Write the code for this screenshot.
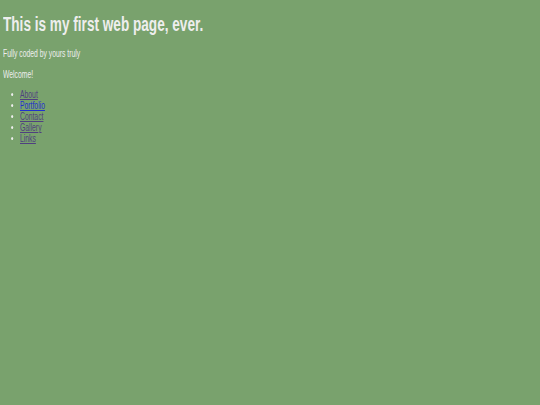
export default function App() {
  return (
    <div className="min-h-[405px] w-full overflow-hidden bg-[#79a26d] px-[3px] pt-[12px] text-[#eeeeee]">
      <div className="origin-top-left scale-x-[0.68] font-['Liberation_Sans',Arial,sans-serif]">
        <h1 className="text-[20px] font-bold leading-[24px]">This is my first web page, ever.</h1>
        <p className="mt-[12px] text-[10px] leading-[12px]">Fully coded by yours truly</p>
        <p className="mt-[9px] text-[10px] leading-[12px]">Welcome!</p>
        <ul className="mt-[8px] list-disc pl-[25px] text-[10px] leading-[11px]">
          <li><a href="#" className="text-[#4f3f80] underline">About</a></li>
          <li><a href="#" className="text-[#1f2fd0] underline">Portfolio</a></li>
          <li><a href="#" className="text-[#4f3f80] underline">Contact</a></li>
          <li><a href="#" className="text-[#4f3f80] underline">Gallery</a></li>
          <li><a href="#" className="text-[#4f3f80] underline">Links</a></li>
        </ul>
      </div>
    </div>
  );
}
